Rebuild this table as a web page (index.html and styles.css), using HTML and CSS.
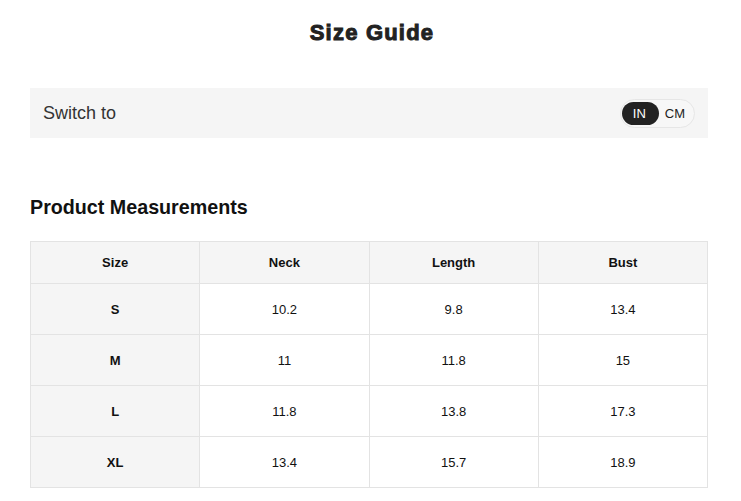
FILE: index.html
```html
<!DOCTYPE html>
<html>
<head>
<meta charset="utf-8">
<link rel="stylesheet" href="styles.css">
</head>
<body>
<div class="page">
  <h1 class="title">Size Guide</h1>
  <div class="switch-bar">
    <span class="switch-label">Switch to</span>
    <div class="toggle">
      <span class="toggle-opt active">IN</span>
      <span class="toggle-opt">CM</span>
    </div>
  </div>
  <h2 class="section-title">Product Measurements</h2>
  <table class="size-table">
    <thead>
      <tr><th>Size</th><th>Neck</th><th>Length</th><th>Bust</th></tr>
    </thead>
    <tbody>
      <tr><th>S</th><td>10.2</td><td>9.8</td><td>13.4</td></tr>
      <tr><th>M</th><td>11</td><td>11.8</td><td>15</td></tr>
      <tr><th>L</th><td>11.8</td><td>13.8</td><td>17.3</td></tr>
      <tr><th>XL</th><td>13.4</td><td>15.7</td><td>18.9</td></tr>
    </tbody>
  </table>
</div>
</body>
</html>
```
FILE: styles.css
```css
html, body {
  margin: 0;
  padding: 0;
  background: #fff;
  font-family: "Liberation Sans", Arial, sans-serif;
  color: #222;
}
.page {
  width: 678px;
  margin-left: 30px;
  padding-top: 20px;
}
.title {
  margin: 0;
  text-align: center;
  font-size: 22px;
  font-weight: 900;
  letter-spacing: 1.2px;
  line-height: 26px;
  color: #222;
  -webkit-text-stroke: 1px #222;
  padding-left: 6px;
}
.switch-bar {
  margin-top: 42px;
  height: 50px;
  background: #f5f5f5;
  display: flex;
  align-items: center;
  justify-content: space-between;
  padding: 0 13px;
}
.switch-label {
  font-size: 18px;
  color: #333;
}
.toggle {
  display: flex;
  align-items: center;
  border: 1px solid #e6e6e6;
  border-radius: 15px;
  background: #f7f7f7;
  padding: 2px 0 2px 1px;
  height: 23px;
}
.toggle-opt {
  font-size: 13px;
  height: 23px;
  line-height: 23px;
  padding: 0 9px 0 6px;
  color: #222;
  border-radius: 12px;
}
.toggle-opt.active {
  background: #222;
  color: #fff;
  padding: 0 13px 0 11px;
}
.section-title {
  margin: 58px 0 0;
  font-size: 19.7px;
  line-height: 23px;
  font-weight: bold;
  color: #111;
}
.size-table {
  margin-top: 22px;
  width: 678px;
  border-collapse: collapse;
  table-layout: fixed;
  font-size: 13px;
  color: #111;
}
.size-table th, .size-table td {
  border: 1px solid #e3e3e3;
  text-align: center;
  padding: 0;
}
.size-table thead th {
  background: #f5f5f5;
  height: 41px;
  font-weight: bold;
}
.size-table tbody th {
  background: #f5f5f5;
  font-weight: bold;
}
.size-table tbody tr {
  height: 51px;
}
```
